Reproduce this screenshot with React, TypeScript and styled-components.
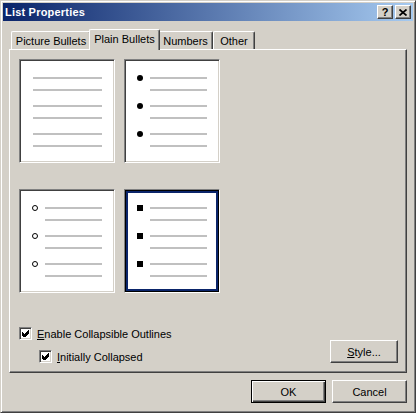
import React from 'react';
import styled, { createGlobalStyle, css } from 'styled-components';

const Global = createGlobalStyle`
  html, body { margin: 0; padding: 0; background: #d4d0c8; }
  body { font-family: "Liberation Sans", Arial, sans-serif; font-size: 11px; color: #000; }
  * { box-sizing: border-box; }
`;

const Window = styled.div`
  width: 416px;
  height: 413px;
  background: #d4d0c8;
  border: 1px solid;
  border-color: #d4d0c8 #404040 #404040 #d4d0c8;
  box-shadow: inset 1px 1px #fff, inset -1px -1px #808080;
  padding: 2px;
  display: flex;
  flex-direction: column;
`;

const TitleBar = styled.div`
  height: 18px;
  flex: none;
  background: linear-gradient(to right, #0a246a, #a6caf0);
  display: flex;
  align-items: center;
  padding: 0 2px;
  gap: 2px;
`;

const TitleText = styled.span`
  flex: 1;
  color: #fff;
  font-weight: bold;
  font-size: 11px;
  letter-spacing: 0.2px;
  white-space: nowrap;
`;

const raised = css`
  border: 1px solid;
  border-color: #fff #404040 #404040 #fff;
  box-shadow: inset -1px -1px #808080;
  background: #d4d0c8;
`;

const CaptionButton = styled.div`
  ${raised};
  width: 16px;
  height: 14px;
  display: flex;
  align-items: center;
  justify-content: center;
  font-weight: bold;
  font-size: 11px;
  line-height: 1;
`;

const Body = styled.div`
  flex: 1;
  padding: 8px 6px 0 6px;
  display: flex;
  flex-direction: column;
`;

const TabStrip = styled.div`
  height: 20px;
  display: flex;
  align-items: flex-end;
  padding-left: 2px;
  position: relative;
  z-index: 1;
`;

const Tab = styled.div<{ $w: number; $active?: boolean }>`
  width: ${(p) => p.$w + (p.$active ? 4 : 0)}px;
  height: ${(p) => (p.$active ? 21 : 18)}px;
  margin: 0 ${(p) => (p.$active ? -2 : 0)}px ${(p) => (p.$active ? -1 : 0)}px;
  position: relative;
  z-index: ${(p) => (p.$active ? 2 : 1)};
  background: #d4d0c8;
  border-left: 1px solid #fff;
  border-top: 1px solid #fff;
  border-right: 1px solid #404040;
  border-radius: 2px 2px 0 0;
  box-shadow: inset -1px 0 #808080;
  display: flex;
  align-items: ${(p) => (p.$active ? 'flex-start' : 'center')};
  padding-top: ${(p) => (p.$active ? 3 : 1)}px;
  justify-content: center;
  white-space: nowrap;
`;

const Panel = styled.div`
  height: 324px;
  flex: none;
  border: 1px solid;
  border-color: #fff #404040 #404040 #fff;
  box-shadow: inset -1px -1px #808080;
  padding: 9px 8px 9px 9px;
  display: flex;
  flex-direction: column;
  justify-content: space-between;
`;

const PreviewGrid = styled.div`
  display: grid;
  grid-template-columns: 96px 96px;
  grid-auto-rows: 104px;
  column-gap: 9px;
  row-gap: 26px;
`;

const Preview = styled.div<{ $selected?: boolean }>`
  width: 96px;
  height: 104px;
  background: #fff;
  border: 1px solid;
  border-color: #808080 #fff #fff #808080;
  box-shadow: ${(p) =>
    p.$selected
      ? 'inset 0 0 0 1px #000, inset 0 0 0 3px #0a246a'
      : 'inset 1px 1px #404040, inset -1px -1px #d4d0c8'};
  padding: 17px 12px 0 0;
  display: flex;
  flex-direction: column;
`;

const Row = styled.div<{ $mt: number }>`
  display: flex;
  align-items: center;
  height: 2px;
  margin-top: ${(p) => p.$mt}px;
`;

const Slot = styled.div<{ $w: number }>`
  width: ${(p) => p.$w}px;
  flex: none;
  display: flex;
  align-items: center;
  padding-left: 12px;
`;

const Line = styled.div`
  flex: 1;
  height: 2px;
  background: #c0c0c0;
`;

const Disc = styled.div`
  width: 6px;
  height: 6px;
  border-radius: 50%;
  background: #000;
  flex: none;
`;

const Circle = styled.div`
  width: 6px;
  height: 6px;
  border-radius: 50%;
  border: 1px solid #000;
  flex: none;
`;

const Square = styled.div`
  width: 6px;
  height: 6px;
  background: #000;
  flex: none;
`;

const BottomArea = styled.div`
  display: flex;
  justify-content: space-between;
  align-items: flex-end;
`;

const Checks = styled.div`
  display: flex;
  flex-direction: column;
  gap: 10px;
`;

const CheckRow = styled.div<{ $indent?: number }>`
  display: flex;
  align-items: center;
  height: 13px;
  margin-left: ${(p) => p.$indent || 0}px;
  gap: 5px;
  white-space: nowrap;
`;

const CheckBox = styled.div`
  width: 13px;
  height: 13px;
  flex: none;
  background: #fff;
  border: 1px solid;
  border-color: #808080 #fff #fff #808080;
  box-shadow: inset 1px 1px #404040, inset -1px -1px #d4d0c8;
  display: flex;
  align-items: center;
  justify-content: center;
`;

const Button = styled.div<{ $w: number; $default?: boolean }>`
  width: ${(p) => p.$w}px;
  height: 23px;
  flex: none;
  background: #d4d0c8;
  display: flex;
  align-items: center;
  justify-content: center;
  ${(p) =>
    p.$default
      ? css`
          border: 1px solid #000;
          box-shadow: inset 1px 1px #fff, inset -1px -1px #404040, inset -2px -2px #808080;
        `
      : css`
          border: 1px solid;
          border-color: #fff #404040 #404040 #fff;
          box-shadow: inset -1px -1px #808080;
        `}
`;

const ButtonRow = styled.div`
  display: flex;
  justify-content: flex-end;
  gap: 6px;
  margin-top: 7px;
`;

const Check = () => (
  <svg width="7" height="7" viewBox="0 0 7 7" shapeRendering="crispEdges">
    <path d="M0 2 L2 4 L6 0 L7 0 L7 3 L2 8 L0 5 Z" fill="#000" />
  </svg>
);

const CloseGlyph = () => (
  <svg width="8" height="7" viewBox="0 0 8 7">
    <path d="M0.5 0.5 L7.5 6.5 M7.5 0.5 L0.5 6.5" stroke="#000" strokeWidth="1.7" />
  </svg>
);

type Kind = 'none' | 'disc' | 'circle' | 'square';

const Bullet = ({ kind }: { kind: Kind }) => {
  if (kind === 'disc') return <Disc />;
  if (kind === 'circle') return <Circle />;
  if (kind === 'square') return <Square />;
  return null;
};

const margins = [0, 10, 14, 10, 14, 10];

const PreviewItem = ({ kind, selected }: { kind: Kind; selected?: boolean }) => (
  <Preview $selected={selected}>
    {margins.map((m, i) => (
      <Row key={i} $mt={m}>
        <Slot $w={kind === 'none' ? 13 : 25}>{i % 2 === 0 && <Bullet kind={kind} />}</Slot>
        <Line />
      </Row>
    ))}
  </Preview>
);

export default function App() {
  return (
    <>
      <Global />
      <Window>
        <TitleBar>
          <TitleText>List Properties</TitleText>
          <CaptionButton>?</CaptionButton>
          <CaptionButton>
            <CloseGlyph />
          </CaptionButton>
        </TitleBar>
        <Body>
          <TabStrip>
            <Tab $w={80}>Picture Bullets</Tab>
            <Tab $w={67} $active>
              Plain Bullets
            </Tab>
            <Tab $w={55}>Numbers</Tab>
            <Tab $w={42}>Other</Tab>
          </TabStrip>
          <Panel>
            <PreviewGrid>
              <PreviewItem kind="none" />
              <PreviewItem kind="disc" />
              <PreviewItem kind="circle" />
              <PreviewItem kind="square" selected />
            </PreviewGrid>
            <BottomArea>
              <Checks>
                <CheckRow>
                  <CheckBox>
                    <Check />
                  </CheckBox>
                  <span>
                    <u>E</u>nable Collapsible Outlines
                  </span>
                </CheckRow>
                <CheckRow $indent={20}>
                  <CheckBox>
                    <Check />
                  </CheckBox>
                  <span>
                    <u>I</u>nitially Collapsed
                  </span>
                </CheckRow>
              </Checks>
              <Button $w={68}>
                <span>
                  <u>S</u>tyle...
                </span>
              </Button>
            </BottomArea>
          </Panel>
          <ButtonRow>
            <Button $w={75} $default>
              OK
            </Button>
            <Button $w={75}>Cancel</Button>
          </ButtonRow>
        </Body>
      </Window>
    </>
  );
}
